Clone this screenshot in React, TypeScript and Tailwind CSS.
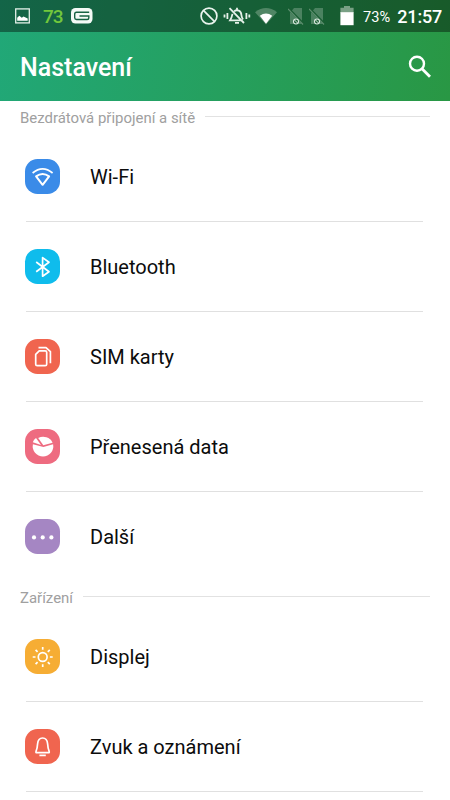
import type { ReactNode } from 'react';

type Item = { label: string; tile: string; icon: ReactNode };

const wireless: Item[] = [
  {
    label: 'Wi-Fi',
    tile: 'bg-[#3a8be8]',
    icon: (
      <>
        <path d="M7.6 14Q17.6 5.6 27.6 14" />
        <path d="M11.1 17.4Q17.6 12.6 24.1 17.4L17.6 25.8Z" strokeWidth="2" />
      </>
    ),
  },
  {
    label: 'Bluetooth',
    tile: 'bg-[#0fbcec]',
    icon: <path d="M11.2 13L24 22.7L17.6 27.2V8.6L24 13.2L11.2 22.7" />,
  },
  {
    label: 'SIM karty',
    tile: 'bg-[#f0654f]',
    icon: (
      <>
        <path d="M14.2 11.8H20.2Q21.7 11.8 21.7 13.3V25.2Q21.7 26.7 20.2 26.7H12.2Q10.7 26.7 10.7 25.2V15.3Z" />
        <path d="M13.5 8.6H21L25.4 12.6V24.2" />
      </>
    ),
  },
  {
    label: 'Přenesená data',
    tile: 'bg-[#ee6b80]',
    icon: (
      <g stroke="none" fill="#fff">
        <path d="M18.4 17.9L28.1 15.2A10.3 10.3 0 1 1 7.9 15.2Z" />
        <path d="M18.3 16.3L13.2 9A10.3 10.3 0 0 1 27.6 13.7Z" />
        <path d="M16 15.9L7.8 13.2A9.5 9.5 0 0 1 11 9Z" />
      </g>
    ),
  },
  {
    label: 'Další',
    tile: 'bg-[#a586c3]',
    icon: (
      <g stroke="none" fill="#fff">
        <circle cx="9" cy="18.4" r="2.1" />
        <circle cx="17.7" cy="18.4" r="2.1" />
        <circle cx="26.4" cy="18.4" r="2.1" />
      </g>
    ),
  },
];

const device: Item[] = [
  {
    label: 'Displej',
    tile: 'bg-[#f6ad34]',
    icon: (
      <>
        <circle cx="17.7" cy="18" r="4.4" />
        <path d="M17.7 8v2.8M17.7 25.2V28M7.7 18h2.8M24.9 18h2.8M10.6 10.9l2 2M22.8 23.1l2 2M10.6 25.1l2-2M22.8 12.9l2-2" />
      </>
    ),
  },
  {
    label: 'Zvuk a oznámení',
    tile: 'bg-[#f0654f]',
    icon: (
      <>
        <path d="M11.8 23.7Q10.5 23.7 11.1 22.2Q12.3 19.5 12.6 14.8Q13.1 9 17.6 9T22.6 14.8Q22.9 19.5 24.1 22.2Q24.7 23.7 23.4 23.7Z" />
        <path d="M14.4 26.4H20.8" />
      </>
    ),
  },
];

function SectionTitle({ children, className }: { children: ReactNode; className: string }) {
  return (
    <div className={`flex items-center pl-5 pr-5 ${className}`}>
      <h2 className="shrink-0 pt-0.5 text-[14.95px] leading-5 text-[#a0a0a0]">{children}</h2>
      <div className="mb-px ml-2.5 h-px flex-1 bg-[#e2e2e2]" />
    </div>
  );
}

function Row({ item, divider }: { item: Item; divider: boolean }) {
  return (
    <li className="flex h-[90px] flex-col">
      <div className="flex flex-1 items-center pl-[25px]">
        <div className={`mb-px size-[35px] rounded-[12.5px] ${item.tile}`}>
          <svg viewBox="0 0 35 35" className="size-full" fill="none" stroke="#fff" strokeWidth="1.7" strokeLinejoin="round">
            {item.icon}
          </svg>
        </div>
        <span className="ml-[30px] text-[20px] leading-6 text-[#0c0c0c]">{item.label}</span>
      </div>
      <div className={`ml-[26px] mr-[27px] h-px ${divider ? 'bg-[#e0e0e0]' : 'bg-white'}`} />
    </li>
  );
}

function NoSim() {
  return (
    <svg width="16" height="20" viewBox="0 0 16 20">
      <path d="M6 2H14V18H2V7Z" fill="#4b8260" />
      <path d="M0 2L15.5 18" stroke="#195d32" strokeWidth="2.4" />
      <path d="M0 3L15 18.5" stroke="#5c8e6e" strokeWidth="1.2" />
      <circle cx="8" cy="15.5" r="2.5" fill="#195d32" stroke="#dcebe1" strokeWidth="1.1" />
      <path d="M6.5 14l3 3" stroke="#dcebe1" strokeWidth="1" />
    </svg>
  );
}

function StatusBar() {
  return (
    <div className="flex h-8 items-center bg-black/40 pl-[15px] pr-2 text-white">
      <svg width="15" height="16" viewBox="0 0 15 16">
        <rect x=".7" y=".9" width="13.6" height="14" fill="none" stroke="#e3f0e9" strokeWidth="1.3" />
        <path d="M2.2 12.8V9.8L4.3 7.7L6.8 9.8L8.5 8.4L12.7 10.5V12.8Z" fill="#fff" />
      </svg>
      <span className="ml-[13px] w-[19px] pt-0.5 text-[19px] font-medium leading-6 tracking-[-1px] text-[#72c83c]">73</span>
      <svg className="ml-[9px]" width="22" height="16" viewBox="0 0 22 16">
        <rect x="0" y="0" width="21.5" height="15.6" rx="4.5" fill="#f4faf6" />
        <path d="M18.2 4.3H5.5Q3.7 4.3 3.7 6.1V9.8Q3.7 11.5 5.5 11.5H16.2Q17.8 11.5 17.8 10V8H8.5" fill="none" stroke="#176343" strokeWidth="1.4" />
      </svg>
      <svg className="ml-[107px]" width="18" height="18" viewBox="0 0 18 18" fill="none" stroke="#eaf4ee" strokeWidth="1.7">
        <circle cx="9" cy="9" r="7.9" />
        <path d="M3.4 3.4L14.6 14.6" />
      </svg>
      <svg className="ml-[5px]" width="28" height="18" viewBox="0 0 28 18" fill="none" stroke="#e5f1e9" strokeWidth="1.8">
        <path d="M9.5 6.8Q8.8 10.5 7 13.4H18.5M11.2 4.3Q13 2.6 15.8 3.6Q18.2 4.6 18.4 8Q18.6 10.3 20 12.5M14 .8V3M12 15.8H16M6.5 1.2L21 16" />
        <path d="M4.4 6V12M1.5 7.5V10.5M23.4 6V12M26.3 7.5V10.5" />
      </svg>
      <svg className="ml-[3px]" width="24" height="18" viewBox="0 0 24 18">
        <path d="M1 5.2Q12 -3 23 5.2L12 17.4Z" fill="#508665" />
        <path d="M5.8 8.7Q12 4.2 18.2 8.7L12 16.8Z" fill="#fff" />
      </svg>
      <div className="ml-[10px] flex gap-[5px]">
        <NoSim />
        <NoSim />
      </div>
      <svg className="ml-[15px]" width="14" height="20" viewBox="0 0 14 20">
        <path d="M.4 1.8H4V0H10V1.8H13.6V7H.4Z" fill="#79a085" />
        <rect x=".4" y="6.2" width="13.2" height="13" fill="#fff" />
      </svg>
      <span className="ml-[9px] w-[28px] pt-px text-[14.6px] leading-6">73%</span>
      <span className="ml-auto pt-px text-[18px] font-medium leading-6 tracking-[-0.2px]">21:57</span>
    </div>
  );
}

export default function App() {
  return (
    <div className="h-[800px] w-[450px] overflow-hidden bg-white font-[Roboto,sans-serif]">
      <header className="h-[101px] bg-linear-[100deg] from-[#21a878] to-[#299744]">
        <StatusBar />
        <div className="flex h-[69px] items-center justify-between pl-5 pr-[18px]">
          <h1 className="pt-0.5 text-[25px] font-medium leading-8 text-white">Nastavení</h1>
          <svg width="24" height="24" viewBox="0 0 24 24" fill="none" stroke="#fff" strokeWidth="2.4">
            <circle cx="9" cy="8.7" r="7" />
            <path d="M14 13.7L22 21.7" strokeWidth="2.9" />
          </svg>
        </div>
      </header>
      <main>
        <SectionTitle className="h-[31px]">Bezdrátová připojení a sítě</SectionTitle>
        <ul>
          {wireless.map((item, i) => (
            <Row key={item.label} item={item} divider={i < wireless.length - 1} />
          ))}
        </ul>
        <SectionTitle className="h-[30px]">Zařízení</SectionTitle>
        <ul>
          {device.map((item) => (
            <Row key={item.label} item={item} divider />
          ))}
        </ul>
      </main>
    </div>
  );
}
